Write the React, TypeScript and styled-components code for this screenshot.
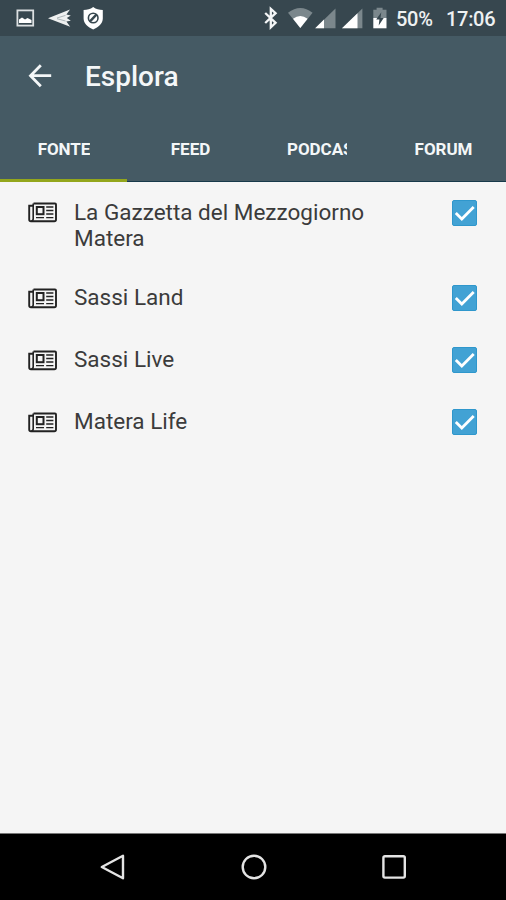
import React from "react";
import styled, { createGlobalStyle } from "styled-components";

const GlobalStyle = createGlobalStyle`
  * { box-sizing: border-box; }
  body { margin: 0; background: #f5f5f5; font-family: Roboto, "Liberation Sans", sans-serif; }
  svg { display: block; flex: none; }
`;

const Screen = styled.div`
  width: 506px;
  height: 900px;
  display: flex;
  flex-direction: column;
  overflow: hidden;
  background: #f5f5f5;
`;

const StatusBar = styled.header`
  height: 36px;
  flex: none;
  display: flex;
  align-items: center;
  justify-content: space-between;
  padding: 0 11px 0 16px;
  background: #37474f;
  color: #eef1f2;
`;

const StatusGroup = styled.div`
  display: flex;
  align-items: center;
  height: 36px;
`;

const StatusText = styled.span<{ $gap: number; $width: number; $spacing: number }>`
  margin-left: ${(p) => p.$gap}px;
  width: ${(p) => p.$width}px;
  letter-spacing: ${(p) => p.$spacing}px;
  font-size: 20px;
  font-weight: 500;
  line-height: 24px;
  white-space: nowrap;
  padding-top: 2px;
`;

const TopPanel = styled.div`
  height: 146px;
  flex: none;
  background: #455a64;
  border-bottom: 1px solid #17394a;
  display: flex;
  flex-direction: column;
  justify-content: space-between;
`;

const Toolbar = styled.div`
  height: 81px;
  display: flex;
  align-items: center;
  padding-left: 28px;
`;

const BackButton = styled.button`
  border: 0;
  padding: 0 0 2px;
  background: none;
  width: 57px;
  height: 40px;
  display: flex;
  align-items: center;
`;

const Title = styled.h1`
  margin: 0;
  font-size: 28px;
  font-weight: 500;
  line-height: 32px;
  color: #f4f7f8;
`;

const Tabs = styled.nav`
  height: 65px;
  margin-bottom: -1px;
  display: grid;
  grid-template-columns: 127px 126px 127px 126px;
`;

const Tab = styled.button<{ $active?: boolean }>`
  border: 0;
  border-bottom: 3px solid ${(p) => (p.$active ? "#93a61c" : "transparent")};
  padding: 2px 0 0 1px;
  background: none;
  display: flex;
  justify-content: center;
  align-items: center;
  font-family: inherit;
  color: #f4f7f8;
`;

const TabLabel = styled.span<{ $width?: number }>`
  ${(p) => (p.$width ? `width: ${p.$width}px;` : "")}
  overflow: hidden;
  white-space: nowrap;
  text-align: left;
  font-size: 17px;
  font-weight: 700;
  line-height: 22px;
  letter-spacing: -0.05px;
`;

const List = styled.ul`
  flex: 1;
  margin: 0;
  padding: 0;
  list-style: none;
`;

const Row = styled.li<{ $tall?: boolean }>`
  height: ${(p) => (p.$tall ? 85.5 : 62)}px;
  padding: 17.5px 28px 0;
  display: flex;
  align-items: flex-start;
`;

const IconSlot = styled.span`
  width: 46px;
  padding-top: 2.5px;
`;

const RowText = styled.span`
  width: 320px;
  margin-top: -1px;
  font-size: 22.5px;
  line-height: 26.4px;
  color: #3b3b3b;
`;

const Check = styled.span`
  margin-left: auto;
  margin-right: 1px;
  width: 25px;
  height: 26px;
  border-radius: 2px;
  background: #42a2d4;
  border: 1px solid #2f97cc;
`;

const NavBar = styled.footer`
  height: 67px;
  flex: none;
  background: #000;
  border-top: 1px solid #777;
  display: grid;
  grid-template-columns: repeat(3, 140.5px);
  justify-content: center;
  padding-left: 1px;
`;

const NavButton = styled.button`
  border: 0;
  padding: 0;
  background: none;
  display: flex;
  align-items: center;
  justify-content: center;
`;

const NewspaperIcon = () => (
  <svg width="30" height="21" viewBox="0 0 30 21" fill="none" stroke="#222">
    <path d="M5.5 1.5H27Q28 1.5 28 2.5V17.5Q28 19.3 26.3 19.3H3Q1.2 19.3 1.2 17.5V3.8H5" strokeWidth="1.9" />
    <path d="M5.2 1.5V16.7Q5.2 18.8 3.3 19" strokeWidth="1.6" />
    <rect x="8.8" y="5" width="6.7" height="7.2" strokeWidth="2" />
    <path d="M18.2 5H25.4M18.2 8.5H25.4M18.2 12H25.4M8 15.6H16M18.2 15.6H25.4" strokeWidth="1.4" />
  </svg>
);

const StatusLeft = () => (
  <svg width="92" height="36" viewBox="16 0 92 36">
    <rect x="17.4" y="10.4" width="15.8" height="15.2" fill="none" stroke="#dce0e2" strokeWidth="1.8" />
    <path d="M19 23v-3.5l3-2 3 2 2.5-1.6 4 2.2V23z" fill="#fff" />
    <path d="M48 18.2 70 9.5 66.4 14.6 70.8 15.4 66.8 18 70.8 20.8 66.4 21.6 70.2 26.8z" fill="#eef0f0" />
    <path d="m57 18 8.5-2.6M57 18.7l8.5 2.3" stroke="#9ba6aa" strokeWidth=".8" />
    <path d="M93.2 7c3 2.3 6 3 9.6 3v8.5c0 5-4.2 8.8-9.6 11-5.4-2.2-9.6-6-9.6-11V10c3.6 0 6.6-.7 9.6-3z" fill="#fff" />
    <circle cx="93.2" cy="18" r="4.8" fill="none" stroke="#37474f" strokeWidth="1.6" />
    <path d="m90 21.3 6.4-6.6" stroke="#37474f" strokeWidth="2.4" />
  </svg>
);

const StatusRight = () => (
  <svg width="126" height="36" viewBox="262 0 126 36">
    <path d="m265.2 13 10.4 9.8-4.8 4.6V8.8l4.8 4.4-10.4 9.8" fill="none" stroke="#f4f6f7" strokeWidth="2.3" />
    <path d="M288 12.8q12.3-9.4 24.6 0L300.3 28z" fill="#7b878c" />
    <path d="M293 18.7q7.3-5.4 14.6 0L300.3 28z" fill="#fff" />
    <path d="M335.5 8.5v19.8h-20.3z" fill="#7b878c" />
    <path d="M324 19.5v8.8h-8.8z" fill="#fff" />
    <path d="M362.4 8.5v19.8H342z" fill="#7b878c" />
    <path d="M357.5 13.3v15H342z" fill="#fff" />
    <path d="M373.3 9.7h3.3V7.8h6v1.9h3.9v8.6h-13.2z" fill="#7b878c" />
    <path d="M373.3 18h13.2v10.3h-13.2z" fill="#fff" />
    <path d="m381.3 12.3-5.1 7.3h3.2l-.7 6 5-7.7h-3.2z" fill="#37474f" />
  </svg>
);

const tabs = [
  { label: "FONTE", active: true },
  { label: "FEED" },
  { label: "PODCAST", width: 60 },
  { label: "FORUM" },
];

const sources = [
  { name: "La Gazzetta del Mezzogiorno Matera", tall: true },
  { name: "Sassi Land" },
  { name: "Sassi Live" },
  { name: "Matera Life" },
];

export default function App() {
  return (
    <>
      <GlobalStyle />
      <Screen>
        <StatusBar>
          <StatusLeft />
          <StatusGroup>
            <StatusRight />
            <StatusText $gap={8} $width={50} $spacing={-0.3}>50%</StatusText>
            <StatusText $gap={0} $width={49} $spacing={-0.3}>17:06</StatusText>
          </StatusGroup>
        </StatusBar>
        <TopPanel>
          <Toolbar>
            <BackButton aria-label="Indietro">
              <svg width="24" height="24" viewBox="0 0 24 24" fill="none" stroke="#f4f7f8" strokeWidth="2.8">
                <path d="M12.8 1.2 2.5 11.7l10.3 10.5M2.3 11.7H23.2" />
              </svg>
            </BackButton>
            <Title>Esplora</Title>
          </Toolbar>
          <Tabs>
            {tabs.map((t) => (
              <Tab key={t.label} $active={t.active}>
                <TabLabel $width={t.width}>{t.label}</TabLabel>
              </Tab>
            ))}
          </Tabs>
        </TopPanel>
        <List>
          {sources.map((s) => (
            <Row key={s.name} $tall={s.tall}>
              <IconSlot><NewspaperIcon /></IconSlot>
              <RowText>{s.name}</RowText>
              <Check role="checkbox" aria-checked="true" aria-label={s.name}>
                <svg width="23" height="24" viewBox="0 0 23 24" fill="none" stroke="#fff" strokeWidth="2.8">
                  <path d="m2.8 12 6 6L20.7 6" />
                </svg>
              </Check>
            </Row>
          ))}
        </List>
        <NavBar>
          <NavButton aria-label="Indietro">
            <svg width="28" height="28" viewBox="0 0 28 28" fill="none" stroke="#e4e4e4" strokeWidth="2.4" strokeLinejoin="round">
              <path d="M24 2.8v22.4L2.8 14z" />
            </svg>
          </NavButton>
          <NavButton aria-label="Home">
            <svg width="28" height="28" viewBox="0 0 28 28" fill="none" stroke="#e4e4e4" strokeWidth="2.4">
              <circle cx="14" cy="14" r="11.3" />
            </svg>
          </NavButton>
          <NavButton aria-label="Recenti">
            <svg width="28" height="28" viewBox="0 0 28 28" fill="none" stroke="#e4e4e4" strokeWidth="2.4">
              <rect x="3.4" y="3.2" width="21.4" height="21.4" rx="1.5" />
            </svg>
          </NavButton>
        </NavBar>
      </Screen>
    </>
  );
}
